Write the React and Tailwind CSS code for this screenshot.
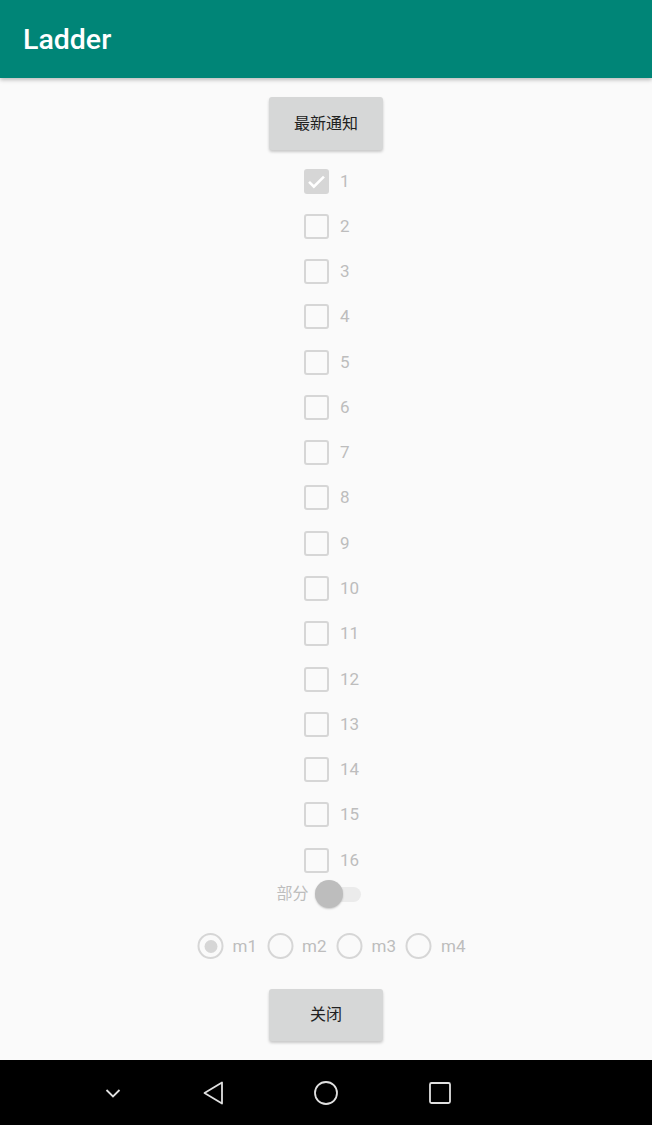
import { useState } from 'react'

const FONT = { fontFamily: 'Roboto, "Noto Sans CJK SC", sans-serif' }

function Check({ checked }) {
  return checked ? (
    <span className="w-[25px] h-[25px] rounded-[3px] bg-[#d6d6d6] flex items-center justify-center flex-shrink-0">
      <svg width="21" height="21" viewBox="0 0 24 24" fill="none" stroke="#fff" strokeWidth="3">
        <path d="M3.5 12.5l5.5 5.5L20.5 6.5" />
      </svg>
    </span>
  ) : (
    <span className="w-[25px] h-[25px] rounded-[3px] border-[2.5px] border-[#d6d6d6] flex-shrink-0" />
  )
}

function Radio({ on, label, last }) {
  return (
    <div className={`flex items-center ${last ? '' : 'mr-[10px]'}`}>
      <span className="w-[26px] h-[26px] rounded-full border-[2.5px] border-[#d6d6d6] flex items-center justify-center">
        {on && <span className="w-[13px] h-[13px] rounded-full bg-[#d6d6d6]" />}
      </span>
      <span className="ml-[9px] text-[17px] text-[#bdbdbd] leading-none">{label}</span>
    </div>
  )
}

export default function App() {
  const [items] = useState(() => Array.from({ length: 16 }, (_, i) => i + 1))

  return (
    <div className="w-[652px] h-[1125px] bg-[#fafafa] flex flex-col overflow-hidden" style={FONT}>

      {/* App bar */}
      <header className="h-[78px] bg-[#008577] flex items-center px-[23px] pt-[3px] shadow-[0_2px_4px_rgba(0,0,0,0.25)] z-10 flex-shrink-0">
        <h1 className="text-white text-[28.5px] font-medium">Ladder</h1>
      </header>

      <main className="flex-1 flex flex-col items-center">
        <button className="mt-[19px] w-[114px] h-[53px] rounded-[3px] bg-[#d6d7d7] shadow-[0_2px_3px_rgba(0,0,0,0.2)] text-[16px] text-[#212121]">
          最新通知
        </button>

        {/* Checkboxes */}
        <div className="mt-[8.5px] w-[44px]">
          {items.map(n => (
            <div key={n} className="h-[45.27px] flex items-center whitespace-nowrap">
              <Check checked={n === 1} />
              <span className="ml-[11px] text-[17px] text-[#bdbdbd] leading-none">{n}</span>
            </div>
          ))}
        </div>

        {/* Switch */}
        <div className="h-[23px] flex items-center">
          <span className="text-[16px] text-[#bdbdbd] leading-none">部分</span>
          <div className="relative w-[61px] h-[28px] ml-[6px]">
            <span className="absolute left-[6px] top-[7px] w-[40px] h-[15px] rounded-full bg-[#ebebeb]" />
            <span className="absolute left-0 top-0 w-[28px] h-[28px] rounded-full bg-[#bdbdbd] shadow-[0_1px_2px_rgba(0,0,0,0.2)]" />
          </div>
        </div>

        {/* Radios */}
        <div className="mt-[27.5px] h-[26px] flex items-center translate-x-[5.5px]">
          <Radio on label="m1" />
          <Radio label="m2" />
          <Radio label="m3" />
          <Radio label="m4" last />
        </div>

        <button className="mt-[30px] w-[114px] h-[52px] rounded-[3px] bg-[#d6d7d7] shadow-[0_2px_3px_rgba(0,0,0,0.2)] text-[16px] text-[#212121]">
          关闭
        </button>
      </main>

      {/* System nav bar */}
      <nav className="h-[65px] bg-black flex-shrink-0 flex items-center">
        <svg className="ml-[103px]" width="20" height="20" viewBox="0 0 20 20" fill="none" stroke="#e0e0e0" strokeWidth="1.8">
          <path d="M3.5 7l6.5 6.5L16.5 7" />
        </svg>
        <svg className="ml-[79px]" width="24" height="26" viewBox="0 0 24 26" fill="none" stroke="#e0e0e0" strokeWidth="1.8">
          <path d="M20 2.5v21L2.5 13z" strokeLinejoin="round" />
        </svg>
        <svg className="ml-[87px]" width="26" height="26" viewBox="0 0 26 26" fill="none" stroke="#e0e0e0" strokeWidth="1.8">
          <circle cx="13" cy="13" r="11" />
        </svg>
        <svg className="ml-[89px]" width="24" height="24" viewBox="0 0 24 24" fill="none" stroke="#e0e0e0" strokeWidth="1.8">
          <rect x="2" y="2" width="20" height="20" rx="1.5" />
        </svg>
      </nav>
    </div>
  )
}
